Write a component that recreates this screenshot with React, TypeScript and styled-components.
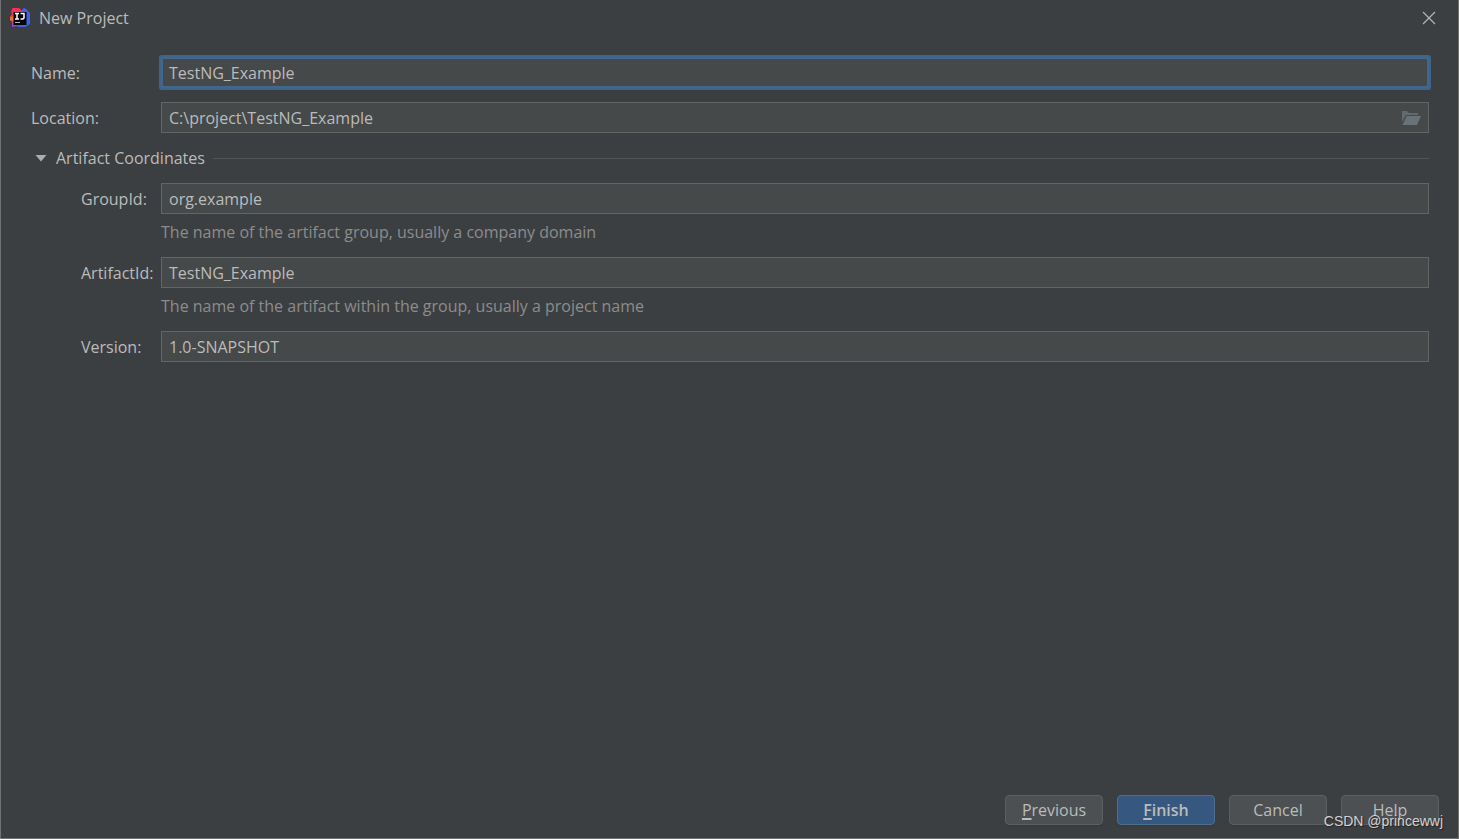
import React, { useState } from 'react';
import styled, { createGlobalStyle, css } from 'styled-components';

const GlobalStyle = createGlobalStyle`
  *, *::before, *::after { box-sizing: border-box; }
  body {
    margin: 0;
    background: #3c3f41;
    color: #bbbbbb;
    font-family: "Open Sans", "Noto Sans", sans-serif;
    font-size: 16px;
    line-height: 22px;
  }
  input, button { font: inherit; color: inherit; }
`;

const Dialog = styled.div`
  position: relative;
  display: flex;
  flex-direction: column;
  min-height: 100vh;
  background: #3c3f41;
  border: solid #707272;
  border-width: 0 1px 1px;
`;

const TitleBar = styled.header`
  display: flex;
  align-items: center;
  gap: 8px;
  height: 36px;
  padding: 0 22px 0 8px;
`;

const Title = styled.h1`
  flex: 1;
  margin: 0;
  font-size: 16px;
  font-weight: 400;
`;

const IconButton = styled.button`
  display: flex;
  padding: 0;
  border: 0;
  background: none;
`;

const Form = styled.form`
  display: flex;
  flex-direction: column;
  flex: 1;
`;

const Fields = styled.div`
  flex: 1;
  padding: 21px 29px 0 30px;
`;

const Row = styled.div<{ $indent?: boolean }>`
  display: grid;
  grid-template-columns: ${p => (p.$indent ? 80 : 130)}px 1fr;
  align-items: center;
`;

const TopRows = styled.div`
  display: grid;
  row-gap: 14px;
`;

const Field = styled.div<{ $focused?: boolean }>`
  display: flex;
  align-items: center;
  height: 31px;
  padding: 0 7px;
  background: #45494a;
  border: 1px solid #646464;
  ${p => p.$focused && css`
    padding: 0 6px;
    border: 2px solid #41678f;
    border-radius: 1px;
    box-shadow: 0 0 0 2px #3f648a;
  `}
`;

const TextInput = styled.input`
  flex: 1;
  min-width: 0;
  height: 22px;
  padding: 0;
  border: 0;
  outline: 0;
  background: transparent;
`;

const Disclosure = styled.div`
  display: flex;
  align-items: center;
  gap: 8px;
  margin: 14px 0;
  &::after {
    content: "";
    flex: 1;
    height: 1px;
    background: #515658;
  }
`;

const DisclosureButton = styled.button`
  display: flex;
  align-items: center;
  gap: 9px;
  padding: 0 0 0 4px;
  border: 0;
  background: none;
`;

const Coordinates = styled.div`
  padding-left: 50px;
`;

const Hint = styled.p`
  margin: 0 0 14px 80px;
  padding-top: 7px;
  color: #8c8c8c;
`;

const Footer = styled.footer`
  display: flex;
  justify-content: flex-end;
  gap: 14px;
  padding: 0 19px 13px;
`;

const Button = styled.button<{ $primary?: boolean }>`
  width: 98px;
  height: 30px;
  padding: 0;
  border: 1px solid ${p => (p.$primary ? '#4c708c' : '#5e6060')};
  border-radius: 4px;
  background: ${p => (p.$primary ? '#365880' : '#4c5052')};
  font-weight: ${p => (p.$primary ? 600 : 400)};
  box-shadow: 0 1px 1px #36393b;
`;

const Mnemonic = styled.u`
  text-decoration-thickness: 2px;
  text-underline-offset: 2px;
`;

const Watermark = styled.span`
  position: absolute;
  right: 15px;
  bottom: 7px;
  color: #d2d2d2;
  font: 14px/20px "Liberation Sans", Arial, sans-serif;
  text-shadow: 1px 1px 1px #222222;
  pointer-events: none;
`;

const Logo = () => (
  <svg width="22" height="22" viewBox="0 0 22 22" aria-hidden="true">
    <defs>
      <linearGradient id="warm" x1="0" y1="0" x2="0" y2="1">
        <stop offset="0" stopColor="#fe2857" />
        <stop offset="0.4" stopColor="#f8354f" />
        <stop offset="0.58" stopColor="#f97a12" />
        <stop offset="0.75" stopColor="#b34b85" />
        <stop offset="1" stopColor="#a03bd4" />
      </linearGradient>
      <linearGradient id="cool" x1="0" y1="0" x2="1" y2="1">
        <stop offset="0" stopColor="#2b7df5" />
        <stop offset="0.5" stopColor="#4f5be0" />
        <stop offset="1" stopColor="#2870fa" />
      </linearGradient>
    </defs>
    <path d="M3.500 1H10l4 4v13L3 20V15L1 13v-3l2-3-1-2z" fill="url(#warm)" />
    <path d="M12 4l3-3 2 1 4 4v11l-5 3H9l-2-2h9V5z" fill="url(#cool)" />
    <path d="M4.500 5h13v13h-13z" fill="#050507" />
    <path d="M6 6.500h4M8 6.500v5.500M6 12h4M11.500 6.500H15V11l-1 1h-2.500" stroke="#fff" strokeWidth="1.500" fill="none" />
    <path d="M6 15.500h5" stroke="#bbb" strokeWidth="1" />
  </svg>
);

const CloseIcon = () => (
  <svg width="14" height="14" viewBox="0 0 14 14" aria-hidden="true">
    <path d="M1 1l12 12M13 1L1 13" stroke="#b4b4b4" strokeWidth="1.2" />
  </svg>
);

const FolderIcon = () => (
  <svg width="20" height="16" viewBox="0 0 20 16" aria-hidden="true">
    <path d="M1 1h5l2 2h9v2H5L1 12z" fill="#616a6e" />
    <path d="M5.600 6H20l-4 9H1.500z" fill="#687277" />
  </svg>
);

const Arrow = ({ open }: { open: boolean }) => (
  <svg width="12" height="8" viewBox="0 0 12 8" aria-hidden="true">
    <path d={open ? 'M0.500 1h11L6 7.500z' : 'M3 0v8l6-4z'} fill="#adadad" />
  </svg>
);

type FieldRowProps = {
  id: string;
  label: string;
  value: string;
  indent?: boolean;
  focused?: boolean;
  children?: React.ReactNode;
};

const FieldRow = ({ id, label, value, indent, focused, children }: FieldRowProps) => (
  <Row $indent={indent}>
    <label htmlFor={id}>{label}</label>
    <Field $focused={focused}>
      <TextInput id={id} type="text" defaultValue={value} />
      {children}
    </Field>
  </Row>
);

export default function App() {
  const [open, setOpen] = useState(true);
  return (
    <>
      <GlobalStyle />
      <Dialog role="dialog" aria-labelledby="title">
        <TitleBar>
          <Logo />
          <Title id="title">New Project</Title>
          <IconButton type="button" aria-label="Close">
            <CloseIcon />
          </IconButton>
        </TitleBar>
        <Form onSubmit={e => e.preventDefault()}>
          <Fields>
            <TopRows>
              <FieldRow id="name" label="Name:" value="TestNG_Example" focused />
              <FieldRow id="location" label="Location:" value={'C:\\project\\TestNG_Example'}>
                <IconButton type="button" aria-label="Browse">
                  <FolderIcon />
                </IconButton>
              </FieldRow>
            </TopRows>
            <Disclosure>
              <DisclosureButton type="button" aria-expanded={open} onClick={() => setOpen(!open)}>
                <Arrow open={open} />
                Artifact Coordinates
              </DisclosureButton>
            </Disclosure>
            {open && (
              <Coordinates>
                <FieldRow id="group" label="GroupId:" value="org.example" indent />
                <Hint>The name of the artifact group, usually a company domain</Hint>
                <FieldRow id="artifact" label="ArtifactId:" value="TestNG_Example" indent />
                <Hint>The name of the artifact within the group, usually a project name</Hint>
                <FieldRow id="version" label="Version:" value="1.0-SNAPSHOT" indent />
              </Coordinates>
            )}
          </Fields>
          <Footer>
            <Button type="button"><Mnemonic>P</Mnemonic>revious</Button>
            <Button type="submit" $primary><Mnemonic>F</Mnemonic>inish</Button>
            <Button type="button">Cancel</Button>
            <Button type="button">Help</Button>
          </Footer>
        </Form>
        <Watermark>CSDN @princewwj</Watermark>
      </Dialog>
    </>
  );
}
